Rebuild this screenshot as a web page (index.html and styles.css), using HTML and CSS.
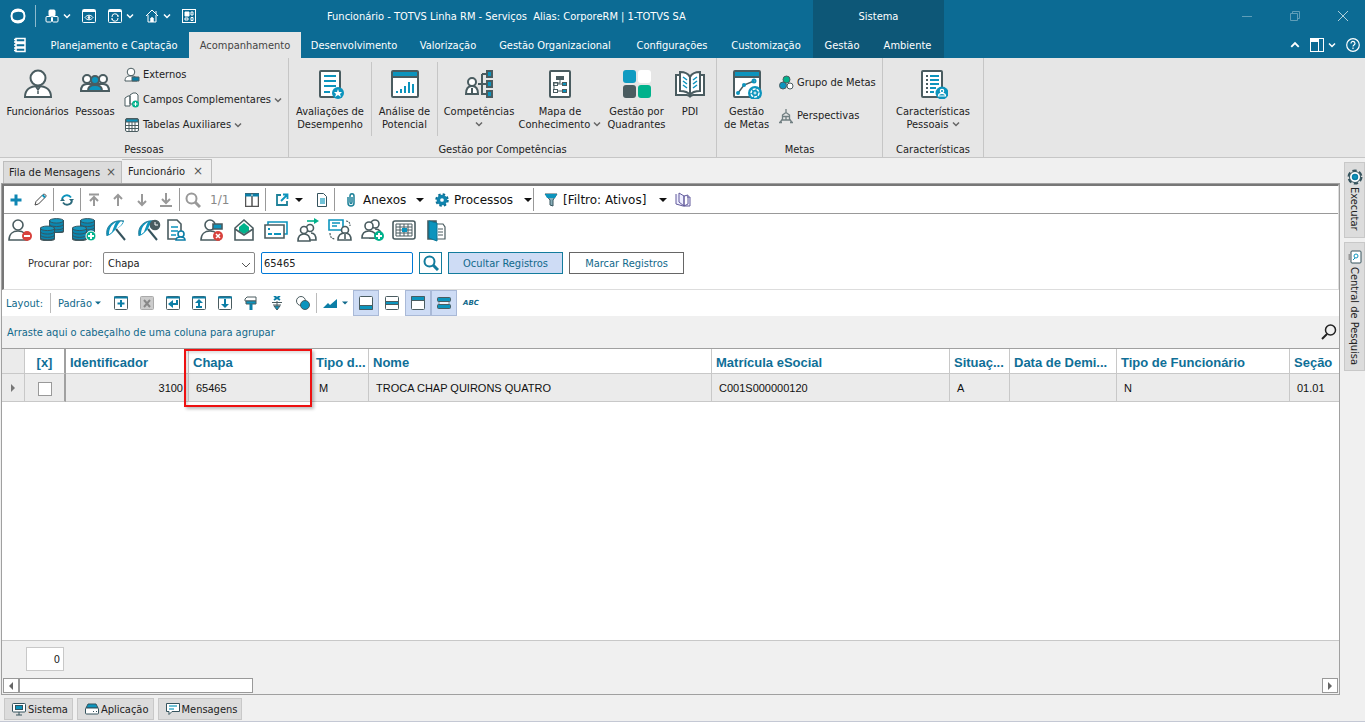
FILE: index.html
```html
<!DOCTYPE html>
<html lang="pt-BR">
<head>
<meta charset="utf-8">
<title>Funcionário - TOTVS Linha RM</title>
<link rel="stylesheet" href="styles.css">
</head>
<body>
<svg class="defs" aria-hidden="true">
  <symbol id="chev" viewBox="0 0 8 8"><path d="M1 2.5 4 5.5 7 2.5" fill="none" stroke="currentColor" stroke-width="1.5"/></symbol>
  <symbol id="caret" viewBox="0 0 8 8"><path d="M0 2h8L4 6z" fill="currentColor"/></symbol>
  <symbol id="person" viewBox="0 0 24 24"><circle cx="10" cy="7" r="5"/><path d="M1 22c0-6 4-9 9-9s9 3 9 9z"/></symbol>
  <symbol id="two" viewBox="0 0 24 24"><circle cx="15" cy="6" r="4"/><path d="M9 20h13c0-6-3-9-7-9"/><circle cx="9" cy="8" r="4"/><path d="M2 20c0-5 3-7 7-7s7 2 7 7z"/></symbol>
  <symbol id="data" viewBox="0 0 16 16"><path d="M0 3v10c0 4 16 4 16 0V3z" fill="#0b86af"/><ellipse cx="8" cy="3" rx="7.5" ry="2.4" fill="#1597bf" stroke="#35535d" stroke-width="1"/><path d="M.5 6.500c0 3.500 15 3.500 15 0M.5 10c0 3.500 15 3.500 15 0M.5 3v10c0 3 15 3 15 0V3" fill="none" stroke="#35535d" stroke-width="1"/></symbol>
  <symbol id="umb" viewBox="0 0 24 24"><path d="M12 11l9 11" stroke="#35535d" stroke-width="2"/><path d="M3 18C1 9 8 1 20 3c-1 4-4 6-8 8-3 3-5 6-9 7z" fill="#0c94bd" stroke="none"/><path d="M5 16.500C5 11 7 7 12 4c-2 4-3 7-4 10zM12 11c1-3 2-5 5-8l2 1c-2 4-4 5-7 7z" fill="#fff" stroke="none"/><path d="M3 18C1 9 8 1 20 3" fill="none" stroke="#2b7f9a" stroke-width="1"/></symbol>
</svg>

<header class="top">
  <div class="titlebar">
    <div class="quick">
      <svg class="logo" viewBox="0 0 16 16"><path d="M1 7C1 3 4 1 8 1s7 2 7 5c-4-3-10-3-14 1zM15 9c0 4-3 6-7 6s-7-2-7-5c4 3 10 3 14-1z" fill="#fff"/><circle cx="8" cy="8" r="6.500" fill="none" stroke="#fff" stroke-width="2"/></svg>
      <i class="tsep"></i>
      <button aria-label="Módulos"><svg class="i16" viewBox="0 0 16 16" fill="none" stroke="#fff"><rect x="5" y="2" width="6" height="6" rx="1" fill="#fff"/><rect x="2" y="8.500" width="5.500" height="5.500" rx="1"/><rect x="8.500" y="8.500" width="5.500" height="5.500" rx="1"/></svg><svg class="i8"><use href="#chev"/></svg></button>
      <button aria-label="Visualizar"><svg class="i16" viewBox="0 0 16 16" fill="none" stroke="#fff"><rect x="1.500" y="1.500" width="13" height="13" rx="1"/><path d="M2 3h12" stroke-width="2"/><path d="M4 9.500c2-3 6-3 8 0-2 3-6 3-8 0z"/><circle cx="8" cy="9.500" r="1" fill="#fff"/></svg></button>
      <button aria-label="Atualizar janela"><svg class="i16" viewBox="0 0 16 16" fill="none" stroke="#fff"><rect x="1.500" y="1.500" width="13" height="13" rx="1"/><path d="M2 3h12" stroke-width="2"/><path d="M5 9a3 3 0 0 1 6-.500M11 10a3 3 0 0 1-6 .500M10 8h2M4 11h2"/></svg><svg class="i8"><use href="#chev"/></svg></button>
      <button aria-label="Início"><svg class="i16" viewBox="0 0 16 16" fill="none" stroke="#fff"><path d="M2 8l6-6 6 6M4 7v7h3v-4h2v4h3V7M12 6V3"/><path d="M7 10h2v4H7z" fill="#fff"/></svg><svg class="i8"><use href="#chev"/></svg></button>
      <button aria-label="Painéis"><svg class="i16" viewBox="0 0 16 16" fill="none" stroke="#fff"><rect x="1.500" y="1.500" width="13" height="13"/><path d="M4 4h4v4H4z" fill="#fff"/><path d="M10 4h2v3h-2zM4 10h3v2H4zM10 9.500h2v3h-2z"/></svg></button>
    </div>
    <h1>Funcionário - TOTVS Linha RM - Serviços&nbsp; Alias: CorporeRM | 1-TOTVS SA</h1>
  </div>
  <div class="context">
    <div class="ctitle">Sistema</div>
    <div class="ctabs"><a href="#">Gestão</a><a href="#">Ambiente</a></div>
  </div>
  <div class="window">
    <div class="winbtns">
      <button aria-label="Minimizar"><svg class="i12" viewBox="0 0 12 12"><path d="M1 6.500h10"/></svg></button>
      <button aria-label="Restaurar"><svg class="i12" viewBox="0 0 12 12"><path d="M1.500 3.500h7v7h-7zM3.500 3.500v-2h7v7h-2"/></svg></button>
      <button class="close" aria-label="Fechar"><svg class="i12" viewBox="0 0 12 12"><path d="M1 1l10 10M11 1L1 11"/></svg></button>
    </div>
    <div class="helpbtns">
      <button aria-label="Recolher"><svg class="i10" viewBox="0 0 8 8"><path d="M1 5.500 4 2.500 7 5.500" fill="none" stroke="#fff" stroke-width="1.500"/></svg></button>
      <button aria-label="Leiaute"><svg class="i14" viewBox="0 0 14 14" fill="none" stroke="#fff"><rect x=".5" y=".5" width="13" height="13"/><path d="M0 2h9M8.500 0v14" /><path d="M0 0h8v4H0z" fill="#fff" stroke="none"/></svg><svg class="i8"><use href="#chev"/></svg></button>
      <button aria-label="Ajuda"><svg class="i14" viewBox="0 0 14 14" fill="none" stroke="#fff" stroke-width="1.200"><circle cx="7" cy="7" r="6.300"/><path d="M5 5.500c0-3 4-2.500 4 0C9 7 7 7 7 8.500M7 9.500v1.500"/></svg></button>
    </div>
  </div>
  <nav class="menu">
    <button aria-label="Menu"><svg class="i16" viewBox="0 0 16 16" fill="none" stroke="#fff" stroke-width="1.500"><path d="M4 1.500h9v3.500H4zM4 6.500h9v3.500H4zM4 11h9v3.500H4zM2 2.500h2M2 5h2M2 8h2M2 11h2M2 13.500h2"/></svg></button>
    <a href="#">Planejamento e Captação</a><a href="#" class="on">Acompanhamento</a><a href="#">Desenvolvimento</a><a href="#">Valorização</a><a href="#">Gestão Organizacional</a><a href="#">Configurações</a><a href="#">Customização</a>
  </nav>
</header>

<section class="ribbon">
  <div class="group g1">
    <div class="items">
      <button class="big"><svg viewBox="0 0 30 30" class="i30 ln"><circle cx="15" cy="9" r="7.500" fill="#fff"/><path d="M2 28c0-7 5-11 13-11s13 4 13 11z" fill="#fff"/><path d="M13 18h4l-2 3zM15 20v5" stroke-width="1.500"/></svg><span>Funcionários</span></button>
      <button class="big"><svg viewBox="0 0 30 30" class="i30 ln"><circle cx="7" cy="10" r="4" fill="#fff"/><circle cx="23" cy="10" r="4" fill="#fff"/><path d="M1 22c0-5 2-7 6-7h16c4 0 6 2 6 7z" fill="#fff"/><circle cx="15" cy="11" r="4" fill="#0c94bd"/><path d="M8 22c0-4 3-6 7-6s7 2 7 6z" fill="#0c94bd"/></svg><span>Pessoas</span></button>
      <div class="list">
        <button><svg class="i16 ln2" viewBox="0 0 16 16"><circle cx="7" cy="5" r="3.800" fill="#fff"/><path d="M1 14c0-4 2-5 6-5s6 1 6 5z" fill="#fff"/><path d="M8 10h7v4H8z" fill="#0b7ea6"/></svg>Externos</button>
        <button><svg class="i16 ln2" viewBox="0 0 16 16"><path d="M1 6l3-2h2v10H1zM6 3l3-2h3l2 2v9H6z" fill="#fff"/><circle cx="11.500" cy="12" r="3.500" fill="#00b28c" stroke="none"/><path d="M11.500 10v4M9.500 12h4" stroke="#fff"/></svg>Campos Complementares<svg class="i8 cv"><use href="#chev"/></svg></button>
        <button><svg class="i16 ln2" viewBox="0 0 16 16"><rect x="1.500" y="1.500" width="13" height="13" rx="1.500" fill="#fff"/><path d="M2 2h12v3H2z" fill="#0c94bd"/><path d="M2 8.500h12M2 11.500h12M5 5v9M8 5v9M11 5v9"/></svg>Tabelas Auxiliares<svg class="i8 cv"><use href="#chev"/></svg></button>
      </div>
    </div>
    <div class="cap">Pessoas</div>
  </div>
  <div class="group g2">
    <div class="items">
      <button class="big"><svg viewBox="0 0 30 30" class="i30 ln"><rect x="5" y="2" width="20" height="26" rx="1" fill="#fff"/><path d="M9 7h12M9 12h12M9 17h12M9 23h6" stroke="#0c94bd"/><circle cx="23" cy="24" r="6" fill="#0c94bd" stroke="none"/><path d="M23 20l1 3h3l-2 2 1 3-3-2-3 2 1-3-2-2h3z" fill="#fff" stroke="none"/></svg><span>Avaliações de<br>Desempenho</span></button>
      <i class="gsep"></i>
      <button class="big"><svg viewBox="0 0 30 30" class="i30 ln"><rect x="2" y="2" width="26" height="26" rx="1" fill="#fff"/><path d="M3 3h24v4H3z" fill="#0c94bd" stroke="none"/><path d="M2 8h26"/><path d="M7 24v-2M11 24v-4M15 24v-7M19 24V13M23 24V15" stroke="#0c94bd"/></svg><span>Análise de<br>Potencial</span></button>
      <i class="gsep"></i>
      <button class="big"><svg viewBox="0 0 30 30" class="i30 ln"><circle cx="8" cy="13" r="4" fill="#fff"/><path d="M2 25c0-5 2-8 6-8s6 3 6 8zM8 19v5" fill="#fff"/><path d="M14 15h9M18 5v20h5M18 5h5"/><path d="M23 2h5v6h-5zM23 12h5v6h-5zM23 22h5v6h-5z" fill="#0c94bd"/></svg><span>Competências<br><svg class="i8 cv"><use href="#chev"/></svg></span></button>
      <button class="big"><svg viewBox="0 0 30 30" class="i30 ln"><rect x="5" y="2" width="20" height="26" rx="1" fill="#fff"/><rect x="12" y="8" width="6" height="2"/><path d="M15 10v4H9v7" stroke-width="1"/><rect x="8.500" y="13.500" width="4" height="3" stroke-width="1"/><rect x="8.500" y="20.500" width="4" height="3" stroke-width="1"/><path d="M13 15h5M13 22h5" stroke-width="1"/><rect x="17.500" y="13.500" width="4" height="3" fill="#0c94bd" stroke-width="1"/><rect x="17.500" y="20.500" width="4" height="3" fill="#0c94bd" stroke-width="1"/></svg><span>Mapa de<br>Conhecimento <svg class="i8 cv"><use href="#chev"/></svg></span></button>
      <button class="big"><svg viewBox="0 0 30 30" class="i30"><rect x="1" y="1" width="13" height="13" rx="3" fill="#0f9bc1"/><rect x="16" y="1" width="13" height="13" rx="3" fill="#fff"/><rect x="1" y="16" width="13" height="13" rx="3" fill="#4a5c60"/><rect x="16" y="16" width="13" height="13" rx="3" fill="#00b28c"/></svg><span>Gestão por<br>Quadrantes</span></button>
      <button class="big"><svg viewBox="0 0 30 30" class="i30 ln"><path d="M5 6H1v20h11c1 0 2 1 3 1s2-1 3-1h11V6h-4" fill="#fff"/><path d="M5 3c5 0 8 1 10 5v18c-2-3-5-4-10-4zM25 3c-5 0-8 1-10 5v18c2-3 5-4 10-4z" fill="#fff"/><path d="M8 8l4 3M8 12l4 3M8 16l4 3M22 8l-4 3M22 12l-4 3M22 16l-4 3" stroke="#0c94bd" stroke-width="1.500"/></svg><span>PDI</span></button>
    </div>
    <div class="cap">Gestão por Competências</div>
  </div>
  <div class="group g3">
    <div class="items">
      <button class="big"><svg viewBox="0 0 30 30" class="i30 ln"><rect x="2" y="2" width="26" height="26" rx="1" fill="#fff"/><path d="M3 3h24v4H3z" fill="#0c94bd" stroke="none"/><path d="M2 8h26"/><path d="M6 24l6-8 10-4" stroke-width="1.500"/><circle cx="6" cy="24" r="1" stroke="#0c94bd"/><circle cx="12" cy="16" r="1" stroke="#0c94bd"/><circle cx="22" cy="12" r="1.500" stroke="#0c94bd"/><circle cx="23" cy="24" r="7" fill="#0c94bd" stroke="none"/><circle cx="23" cy="24" r="4" stroke="#fff" stroke-width="1.500" stroke-dasharray="3 1"/><circle cx="23" cy="24" r="1" stroke="#fff" stroke-width="1"/></svg><span>Gestão<br>de Metas</span></button>
      <div class="list wide">
        <button><svg class="i16 ln2" viewBox="0 0 16 16"><circle cx="8.500" cy="4.500" r="3.500" fill="#00b28c"/><circle cx="5" cy="10.500" r="3.500" fill="#0c94bd"/><circle cx="12" cy="11" r="3" fill="#fff"/></svg>Grupo de Metas</button>
        <button><svg class="i16 ln2" viewBox="0 0 16 16"><path d="M8 1v4M4.500 7L8 4.500 11.500 7v5h-7zM4 8.500h8M8 8v4M4.500 11L2 14.500M11.500 11l2.500 3.500M1 14.500h3M12 14.500h3" stroke-width="1.300" opacity=".75"/></svg>Perspectivas</button>
      </div>
    </div>
    <div class="cap">Metas</div>
  </div>
  <div class="group g4">
    <div class="items">
      <button class="big"><svg viewBox="0 0 30 30" class="i30 ln"><rect x="4" y="2" width="20" height="26" rx="1" fill="#fff"/><path d="M8 7h2M8 11h2M8 15h2M8 19h2M8 23h2" /><path d="M12 7h9M12 11h9M12 15h9M12 19h6M12 23h4" stroke="#0c94bd"/><circle cx="24" cy="24" r="6.500" fill="#0c94bd" stroke="none"/><circle cx="24" cy="22" r="1.700" stroke="#fff" stroke-width="1.200"/><path d="M20.500 27c0-3.500 7-3.500 7 0z" stroke="#fff" stroke-width="1.200"/></svg><span>Características<br>Pessoais <svg class="i8 cv"><use href="#chev"/></svg></span></button>
    </div>
    <div class="cap">Características</div>
  </div>
</section>

<div class="work">
  <main>
    <div class="doctabs">
      <div class="dt">Fila de Mensagens<button aria-label="Fechar Fila de Mensagens">×</button></div>
      <div class="dt on">Funcionário<button aria-label="Fechar Funcionário">×</button></div>
    </div>
    <div class="panel">
      <div class="inner">
        <div class="tools">
          <button aria-label="Novo"><svg class="i14" viewBox="0 0 14 14"><path d="M7 1.500v11M1.500 7h11" stroke="#0f86b3" stroke-width="3"/></svg></button>
          <button aria-label="Editar"><svg class="i14" viewBox="0 0 14 14" fill="none" stroke="#444"><path d="M2 12l1-3.500 7-7c2-1 4 1 2.500 2.500l-7 7z"/><path d="M9.500 2l2.500 2.500" stroke="#0c94bd" stroke-width="2"/></svg></button>
          <i></i>
          <button aria-label="Atualizar"><svg class="i14" viewBox="0 0 14 14" fill="none" stroke="#0c94bd" stroke-width="1.800"><path d="M2 6a5 5 0 0 1 9-1.500"/><path d="M12 8a5 5 0 0 1-9 1.500" stroke="#2c6a7c"/><path d="M9 6h5l-2.500 3zM5 8H0l2.500-3z" fill="#2c6a7c" stroke="none"/></svg></button>
          <i></i>
          <button aria-label="Primeiro"><svg class="i14 gr" viewBox="0 0 14 14"><path d="M2 1.500h10M7 4v9M3 8l4-4 4 4"/></svg></button>
          <button aria-label="Anterior"><svg class="i14 gr" viewBox="0 0 14 14"><path d="M7 2v11M3 6l4-4 4 4"/></svg></button>
          <button aria-label="Próximo"><svg class="i14 gr" viewBox="0 0 14 14"><path d="M7 1v11M3 8l4 4 4-4"/></svg></button>
          <button aria-label="Último"><svg class="i14 gr" viewBox="0 0 14 14"><path d="M7 0v10M3 6l4 4 4-4M1 13h12"/></svg></button>
          <i></i>
          <button aria-label="Localizar"><svg class="i16 gr" viewBox="0 0 16 16"><circle cx="6.500" cy="6.500" r="5"/><path d="M10 10l5 5" stroke-width="3"/></svg></button>
          <span class="count">1/1</span>
          <button aria-label="Colunas"><svg class="i14" viewBox="0 0 14 14" fill="none" stroke="#555"><path d="M.5.500h13v13H.5zM7 3v11" stroke-width="1.500"/><path d="M0 2h6.500M7.500 2H14" stroke="#0c7ea6" stroke-width="3"/></svg></button>
          <i></i>
          <button class="exp" aria-label="Exportar"><svg class="i14" viewBox="0 0 14 14" fill="none" stroke="#1c8098" stroke-width="1.800"><path d="M6 2H2v10h10V8"/><path d="M6 8l6-6M8 1.500h4.500V6" stroke="#0c94bd"/></svg><svg class="i8"><use href="#caret"/></svg></button>
          <button class="doc" aria-label="Relatório"><svg class="i14" viewBox="0 0 14 14" fill="none" stroke="#35535d"><path d="M2.500.500h6l3 3v10h-9z"/><path d="M5 6h5M5 8h5M5 10h5" stroke="#42aeca" stroke-width="1.500"/></svg></button>
          <i></i>
          <button class="tx anexos"><svg class="i14" viewBox="0 0 14 14" fill="none" stroke="#1c8098" stroke-width="1.500"><path d="M4 4v6c0 4 6 4 6 0V3c0-3-4-3-4 0v6c0 2 2 2 2 0V4"/></svg><span>Anexos</span><svg class="i8"><use href="#caret"/></svg></button>
          <button class="tx proc"><svg class="i14" viewBox="0 0 14 14" fill="none"><circle cx="7" cy="7" r="5.500" stroke="#0b6d91" stroke-width="2.500" stroke-dasharray="2.320 2"/><circle cx="7" cy="7" r="3.600" stroke="#0f83ad" stroke-width="3.500"/></svg><span>Processos</span><svg class="i8"><use href="#caret"/></svg></button>
          <i></i>
          <button class="tx filtro"><svg class="i14" viewBox="0 0 14 14"><path d="M1 1h12L9 7v6l-3-1V7z" fill="#8aafb9" stroke="#35535d"/><path d="M1 1h12l-2 4H3z" fill="#0c94bd"/></svg><span>[Filtro: Ativos]</span><svg class="i8"><use href="#caret"/></svg></button>
          <button class="fav" aria-label="Favoritos"><svg class="i16" viewBox="0 0 16 16" fill="#eef" stroke="#625b9b"><path d="M1 2v10l7 2h7V5h-3M4 1v9l5 4V4zM9 4l4-1v9l-4 2z"/></svg></button>
        </div>
        <div class="actions">
          <button aria-label="Demitir"><svg viewBox="0 0 24 24"><use href="#person" fill="#fff"/><circle cx="19" cy="18" r="5" fill="#d8423d" stroke="none"/><path d="M16 18h6" stroke="#fff" stroke-width="2"/></svg></button>
          <button aria-label="Bases"><svg viewBox="0 0 24 24"><use href="#data" x="9" y="0" width="15" height="15"/><use href="#data" x="0" y="7" width="15" height="16"/></svg></button>
          <button aria-label="Incluir base"><svg viewBox="0 0 24 24"><use href="#data" x="8" y="0" width="15" height="15"/><use href="#data" x="0" y="7" width="15" height="16"/><circle cx="19" cy="18" r="5" fill="#00b28c" stroke="#fff" stroke-width="1"/><path d="M16 18h6M19 15v6" stroke="#fff" stroke-width="2"/></svg></button>
          <button aria-label="Férias"><svg viewBox="0 0 24 24"><use href="#umb"/></svg></button>
          <button aria-label="Programar férias"><svg viewBox="0 0 24 24"><use href="#umb"/><circle cx="19" cy="7" r="4.500" fill="#4a5c60"/><path d="M19 4v3h3" stroke="#fff" stroke-width="1"/></svg></button>
          <button aria-label="Ficha"><svg viewBox="5 0 24 24"><path d="M5 2h9l4 4v15H5z" fill="#fff"/><path d="M8 9h7M8 13h7M8 17h5" stroke="#0c94bd"/><circle cx="18" cy="16" r="3" stroke="#0c7ea6" fill="#fff"/><path d="M13 22c0-4 9-4 9 0z" stroke="#0c7ea6" fill="#fff"/></svg></button>
          <button aria-label="Cancelar"><svg viewBox="0 0 24 24"><use href="#person" fill="#fff"/><path d="M13 6h9v5h-9z" fill="#0c94bd"/><circle cx="18" cy="18" r="5" fill="#d8423d" stroke="none"/><path d="M16 16l4 4M20 16l-4 4" stroke="#fff" stroke-width="1.500"/></svg></button>
          <button aria-label="Correio"><svg viewBox="0 0 24 24"><path d="M3 10l9-8 9 8v12H3z" fill="#fff"/><path d="M7 9l5-4 5 4v4l-5 3-5-3z" fill="#00b28c" stroke="none"/><path d="M3 11l9 6 9-6"/></svg></button>
          <button aria-label="Cartões"><svg viewBox="0 0 24 24"><path d="M4 4h19v12H4z" stroke="#0c94bd"/><path d="M1 7h19v13H1z" fill="#fff"/><path d="M4 11h2M4 16h4M10 16h7" stroke="#0c94bd" stroke-width="2"/></svg></button>
          <button aria-label="Transferir"><svg viewBox="0 0 24 24"><path d="M11 3h9" stroke="#00b28c"/><path d="M18 0l5 3-5 3z" fill="#00b28c" stroke="none"/><circle cx="14" cy="10" r="3.500"/><path d="M10 22h10c0-5-2-7-5-7"/><circle cx="8" cy="12" r="3.500" fill="#fff"/><path d="M2 23c0-5 2-7 6-7s6 2 6 7z" fill="#fff"/></svg></button>
          <button aria-label="Substituir"><svg viewBox="0 0 24 24"><path d="M1 2h14v10H1z" fill="#fff" stroke="#0c94bd"/><path d="M4 5h8M4 8h5" stroke="#0c94bd"/><path d="M18 3c3 0 4 2 4 5M2 15c0 4 2 6 5 6" stroke-width="1.200" stroke-dasharray="2 1"/><circle cx="17" cy="12" r="3.500" fill="#fff"/><path d="M10 22c0-5 3-7 7-7s6 2 6 7zM17 16v5" fill="#fff"/></svg></button>
          <button aria-label="Incluir dependentes"><svg viewBox="0 0 24 24"><use href="#two" fill="#fff"/><circle cx="19" cy="18" r="5" fill="#00b28c" stroke="none"/><path d="M16 18h6M19 15v6" stroke="#fff" stroke-width="2"/></svg></button>
          <button aria-label="Calendário"><svg viewBox="0 0 24 24"><rect x="1" y="3" width="22" height="18" rx="2"/><path d="M4 6h16v12H4zM4 9h16M4 12h16M4 15h16M8 6v12M12 6v12M16 6v12" stroke-width="1"/><path d="M10 10h5v4h-5z" fill="#0c94bd" stroke="none"/></svg></button>
          <button aria-label="Livro"><svg viewBox="0 0 24 24"><path d="M12 6h7l2 3v12h-9" stroke-width="1.200"/><path d="M14 11h5M14 14h5M14 17h5" stroke-width="1"/><path d="M4 3h8v18H4z" fill="#35535d"/><path d="M5 3l8 2v18l-8-3z" fill="#0c94bd" stroke="#0b7696" stroke-width="1"/></svg></button>
        </div>
        <form class="search" onsubmit="return false">
          <label for="campo">Procurar por:</label>
          <span class="sel"><select id="campo"><option>Chapa</option></select><svg class="i10" viewBox="0 0 10 10"><path d="M1 3l4 4 4-4" fill="none" stroke="#555"/></svg></span>
          <input type="text" value="65465" aria-label="Valor da busca">
          <button class="go" aria-label="Procurar"><svg class="i16" viewBox="0 0 16 16" fill="none" stroke="#137c9d"><circle cx="6.500" cy="6.500" r="5" stroke-width="2"/><path d="M10 10l5 5" stroke-width="3"/></svg></button>
          <button class="fb active">Ocultar Registros</button>
          <button class="fb">Marcar Registros</button>
        </form>
      </div>
      <div class="layout">
        <span class="lt">Layout:</span><i></i>
        <button class="pad">Padrão <svg class="i6"><use href="#caret"/></svg></button>
        <button aria-label="Adicionar"><svg class="i14" viewBox="0 0 14 14"><rect x=".5" y=".5" width="13" height="13" rx="1"/><path d="M0 1.500h14M7 4v7M3.500 7.500h7" stroke="#0c7ea6" stroke-width="2"/></svg></button>
        <button aria-label="Excluir"><svg class="i14" viewBox="0 0 14 14"><rect x=".5" y=".5" width="13" height="13" rx="1" fill="#ccc" stroke="#aaa"/><path d="M4 4l6 7M10 4l-6 7" stroke="#888" stroke-width="2"/></svg></button>
        <button aria-label="Restaurar layout"><svg class="i14" viewBox="0 0 14 14"><rect x=".5" y=".5" width="13" height="13" rx="1"/><path d="M0 1.500h14M11 4v4H5" stroke="#0c7ea6" stroke-width="2"/><path d="M7 4v8L2 8z" fill="#0c7ea6" stroke="none"/></svg></button>
        <button aria-label="Carregar"><svg class="i14" viewBox="0 0 14 14"><rect x=".5" y=".5" width="13" height="13" rx="1"/><path d="M0 1.500h14M7 6v5M4 11h6" stroke="#0c7ea6" stroke-width="2"/><path d="M3 7h8L7 3z" fill="#0c7ea6" stroke="none"/></svg></button>
        <button aria-label="Salvar"><svg class="i14" viewBox="0 0 14 14"><rect x=".5" y=".5" width="13" height="13" rx="1"/><path d="M0 1.500h14M7 3v5" stroke="#0c7ea6" stroke-width="2"/><path d="M3 8h8l-4 4z" fill="#0c7ea6" stroke="none"/></svg></button>
        <button aria-label="Formatar"><svg class="i14" viewBox="0 0 14 14"><path d="M3 1h9v4H1V3z" fill="#fff"/><path d="M2 5h10v3H2z" fill="#0c94bd"/><path d="M7 8v6" stroke="#0c7ea6" stroke-width="3"/></svg></button>
        <button aria-label="Ajustar"><svg class="i14" viewBox="0 0 14 14"><path d="M4 0l6 4M10 0L4 4" stroke="#0c7ea6" stroke-width="2"/><path d="M2 6.500h10M3 9h8M7 5v9" /><path d="M4 10h6l-3 4z" fill="#0c94bd"/></svg></button>
        <button aria-label="Condições"><svg class="i14" viewBox="0 0 14 14"><circle cx="5" cy="5" r="4.500" fill="#fff"/><circle cx="9" cy="9" r="4.500" fill="#0c94bd"/></svg></button>
        <i></i>
        <button class="chart" aria-label="Gráfico"><svg class="i14" viewBox="0 0 14 14"><path d="M0 12l5-5 2 2 7-6v9z" fill="#0c7ea6" stroke="none"/></svg><svg class="i6"><use href="#caret"/></svg></button>
        <button class="sq" aria-label="Rodapé"><svg class="i14" viewBox="0 0 14 14"><rect x=".5" y=".5" width="13" height="13" rx="1" fill="#fff"/><path d="M.5 9.500h13v4H.5z" fill="#0c94bd"/></svg></button>
        <button aria-label="Centro"><svg class="i14" viewBox="0 0 14 14"><rect x=".5" y=".5" width="13" height="13" rx="1" fill="#fff"/><path d="M.5 5.500h13v3H.5z" fill="#0c94bd"/></svg></button>
        <button class="sq" aria-label="Cabeçalho"><svg class="i14" viewBox="0 0 14 14"><rect x=".5" y=".5" width="13" height="13" rx="1" fill="#fff"/><path d="M.5.500h13v4H.5z" fill="#0c94bd"/></svg></button>
        <button class="sq" aria-label="Linhas"><svg class="i14" viewBox="0 0 14 14"><path d="M2 5v4h10V5" fill="#fff" opacity=".6"/><rect x=".5" y="1.500" width="13" height="4" rx="1" fill="#0c94bd"/><rect x=".5" y="8.500" width="13" height="4" rx="1" fill="#0c94bd"/></svg></button>
        <button class="abc">ABC</button>
      </div>
      <div class="groupby"><span>Arraste aqui o cabeçalho de uma coluna para agrupar</span><button aria-label="Pesquisar na grade"><svg class="i16" viewBox="0 0 16 16" fill="none" stroke="#222"><circle cx="9.500" cy="6" r="5" stroke-width="1.500"/><path d="M6 10l-5 5" stroke-width="2"/></svg></button></div>
      <div class="gridbox">
        <table>
          <colgroup><col class="c0"><col class="c1"><col class="c2"><col class="c3"><col class="c4"><col class="c5"><col class="c6"><col class="c7"><col class="c8"><col class="c9"><col class="c10"></colgroup>
          <thead><tr><th class="ind"></th><th class="ck">[x]</th><th>Identificador</th><th>Chapa</th><th>Tipo d...</th><th>Nome</th><th>Matrícula eSocial</th><th>Situaç...</th><th>Data de Demi...</th><th>Tipo de Funcionário</th><th>Seção</th></tr></thead>
          <tbody><tr><td class="ind"><svg class="i6" viewBox="0 0 6 8"><path d="M1 0l4 4-4 4z" fill="#777"/></svg></td><td class="ck"><input type="checkbox" aria-label="Selecionar registro"></td><td class="num">3100</td><td>65465</td><td>M</td><td>TROCA CHAP QUIRONS QUATRO</td><td>C001S000000120</td><td>A</td><td></td><td>N</td><td>01.01</td></tr></tbody>
        </table>
        <div class="mark"></div>
      </div>
      <div class="summary"><output>0</output></div>
      <div class="scroll"><button aria-label="Rolar à esquerda"><svg class="i6" viewBox="0 0 6 8"><path d="M5 0v8L1 4z" fill="#666"/></svg></button><div class="thumb"></div><span class="track"></span><button aria-label="Rolar à direita"><svg class="i6" viewBox="0 0 6 8"><path d="M1 0l4 4-4 4z" fill="#666"/></svg></button></div>
    </div>
  </main>
  <aside>
    <button><svg class="i16" viewBox="0 0 16 16" fill="none" stroke="#35535d"><circle cx="8" cy="8" r="6" stroke-width="3" stroke-dasharray="4 2.283"/><circle cx="8" cy="8" r="5.500" fill="#fff"/><circle cx="8" cy="8" r="2.500" fill="#0c94bd" stroke="#0c7ea6" stroke-width="1.500"/></svg><span>Executar</span></button>
    <button><svg class="i16" viewBox="0 0 16 16" fill="none" stroke="#35535d"><rect x="4" y="2" width="10" height="12" rx="1" fill="#fff"/><path d="M2.500 5v6" stroke="#999" stroke-width="2"/><circle cx="9" cy="7" r="2" stroke="#0c94bd"/><path d="M8 9l-2 2" stroke="#0c94bd"/></svg><span>Central de Pesquisa</span></button>
  </aside>
</div>

<footer>
  <button><svg class="i14" viewBox="0 0 14 14" fill="none" stroke="#35535d"><rect x=".5" y="1.500" width="13" height="8.500" rx="1" fill="#fff"/><rect x="3.500" y="3.500" width="7" height="4" fill="#0c94bd"/><path d="M7 10v3M4 13h6"/></svg>Sistema</button>
  <button><svg class="i14" viewBox="0 0 14 14" fill="none" stroke="#35535d"><path d="M1 6l2-4h8l2 4z" fill="#0c94bd"/><rect x=".5" y="6" width="13" height="6" rx="1" fill="#fff"/><path d="M8 9.500h1M11 9.500h1"/></svg>Aplicação</button>
  <button><svg class="i14" viewBox="0 0 14 14" fill="none" stroke="#35535d"><path d="M.5 1.500h13v8H6l-3 3v-3H.5z" fill="#fff"/><path d="M3 4h8M3 7h5" stroke="#42aeca" stroke-width="1.500"/></svg>Mensagens</button>
</footer>
</body>
</html>
```
FILE: styles.css
```css
* { box-sizing: border-box; }
body {
  margin: 0; min-height: 100vh; display: flex; flex-direction: column;
  background: #f0f0f0; color: #222;
  font: 11px/13px "DejaVu Sans Condensed", "Noto Sans", sans-serif; overflow: hidden;
}
button { font: inherit; color: inherit; background: none; border: 0; padding: 0; margin: 0; display: inline-flex; align-items: center; justify-content: center; }
a { color: inherit; text-decoration: none; }
svg { flex: none; }
i { flex: none; }
.defs { position: absolute; width: 0; height: 0; }
.i6 { width: 6px; height: 8px; }
.i8 { width: 8px; height: 8px; }
.i10 { width: 10px; height: 10px; }
.i12 { width: 12px; height: 12px; }
.i14 { width: 14px; height: 14px; }
.i16 { width: 16px; height: 16px; }
.i30 { width: 30px; height: 30px; }
.ln { fill: none; stroke: #4a5c60; stroke-width: 2; }
.ln2 { fill: none; stroke: #4a5c60; }
.cv { color: #666; }

/* Title bar and menu */
.top { display: grid; grid-template: 32px 26px / 813px 131px 1fr; background: #0c6b94; color: #fff; }
.titlebar { display: grid; grid-template-columns: 327px 1fr; align-items: center; }
.quick { display: flex; align-items: center; }
.quick button { margin-right: 10px; gap: 3px; }
.logo { width: 16px; height: 16px; margin-left: 10px; }
.tsep { width: 1px; height: 22px; background: #8dbacd; margin: 0 8px 0 9px; }
h1 { margin: 0; font: inherit; white-space: nowrap; }
.context { grid-row: 1 / 3; grid-column: 2; background: #0d5777; display: grid; grid-template-rows: 32px 26px; align-items: center; text-align: center; }
.ctabs { display: grid; grid-template-columns: 58px 73px; }
.window { grid-row: 1 / 3; grid-column: 3; display: grid; grid-template-rows: 32px 26px; }
.winbtns, .helpbtns { display: flex; justify-content: flex-end; align-items: center; }
.winbtns { gap: 36px; padding-right: 16px; fill: none; stroke: #5f9eb8; }
.close { stroke: #b0cfdb; }
.helpbtns { gap: 10px; padding-right: 5px; }
.helpbtns button { gap: 4px; }
.menu { grid-row: 2; grid-column: 1; display: grid; grid-template-columns: 39px 150px 112px 106px 82px 132px 102px 86px; align-items: stretch; }
.menu a { display: flex; align-items: center; justify-content: center; white-space: nowrap; }
.menu .on { background: #e6e6e6; color: #444; }

/* Ribbon */
.ribbon { display: flex; height: 100px; background: #e6e6e6; border-bottom: 1px solid #c6c6c6; }
.group { display: flex; flex-direction: column; border-right: 1px solid #c6c6c6; white-space: nowrap; }
.g1 { width: 289px; } .g2 { width: 428px; } .g3 { width: 166px; } .g4 { width: 101px; }
.items { display: grid; flex: 1; }
.g1 .items { grid-template-columns: 75px 40px 1fr; }
.g2 .items { grid-template-columns: 82px 1px 65px 1px 82px 80px 73px 34px; }
.g3 .items { grid-template-columns: 59px 1fr; }
.big { flex-direction: column; justify-content: flex-start; padding-top: 11px; gap: 6px; width: 100%; min-width: 0; }
.g2 .gsep { background: #c6c6c6; margin: 4px 0 0; height: 74px; }
.cap { text-align: center; height: 14px; }
.list { padding: 4px 0 0 9px; display: flex; flex-direction: column; align-items: flex-start; }
.list button { height: 25px; gap: 3px; }
.wide { padding: 8px 0 0 2px; }
.wide button { height: 33px; }

/* Work area */
.work { flex: 1; display: flex; }
main { flex: 1; min-width: 0; display: flex; flex-direction: column; padding: 1px 0 0 1px; }
.doctabs { display: flex; align-items: flex-end; height: 24px; padding-left: 2px; }
.dt { height: 22px; padding: 0 5px; display: flex; align-items: center; justify-content: space-between; background: #dcdcdc; border: 1px solid #bdbdbd; border-bottom: 0; width: 119px; }
.dt.on { height: 24px; width: 90px; background: #f0f0f0; border-left: 0; padding: 0 8px 0 6px; }
.dt button { font: 12px/13px "DejaVu Sans", sans-serif; color: #555; }
.panel { flex: 1; display: flex; flex-direction: column; border: 1px solid #a0a0a0; background: #fff; }
.inner { border: solid #777; border-width: 2px 0 0 2px; border-bottom: 1px solid #ddd; border-right: 1px solid #ddd; }
.tools { display: flex; align-items: center; height: 28px; border-bottom: 1px solid #999; color: #111; font: 12px/16px "DejaVu Sans", sans-serif; }
.tools i { width: 1px; height: 23px; background: #999; margin: 0 1px; }
.tools button { width: 24px; height: 24px; }
.tools .count { width: 35px; color: #888; padding-left: 5px; }
.tools .exp { width: 44px; gap: 6px; }
.tools .doc { width: 22px; }
.tools .tx { width: auto; justify-content: flex-start; gap: 5px; white-space: nowrap; }
.tools .anexos { padding-left: 8px; width: 88px; }
.tools .proc { padding-left: 11px; width: 108px; }
.tools .filtro { padding-left: 9px; width: 132px; }
.tools .fav { width: 32px; }
.tx span { flex: 1; text-align: left; }
.gr { fill: none; stroke: #999; stroke-width: 2; }
.actions { display: flex; height: 32px; align-items: center; }
.actions button { width: 32px; }
.actions svg { width: 24px; height: 24px; fill: none; stroke: #4a5c60; stroke-width: 1.6; overflow: visible; }
.search { display: flex; height: 43px; align-items: flex-start; padding: 6px 0 0 24px; color: #333; }
.search label { width: 75px; line-height: 24px; }
.sel { position: relative; width: 152px; margin-right: 6px; }
.sel svg { position: absolute; right: 4px; top: 8px; pointer-events: none; }
select { appearance: none; width: 100%; height: 22px; border: 1px solid #888; border-radius: 2px; background: #fff; font: inherit; padding: 0 4px; color: #222; }
.search input { width: 152px; height: 22px; border: 1px solid #0078d7; border-radius: 2px; font: inherit; padding: 0 2px; color: #222; margin-right: 6px; }
.go { width: 23px; height: 22px; border: 1px solid #137c9d; margin-right: 6px; }
.fb { width: 115px; height: 22px; border: 1px solid #666; color: #11698b; margin-right: 6px; background: #fff; }
.fb.active { background: #cedcf5; border-color: #137c9d; }
.layout { display: flex; height: 26px; align-items: center; color: #11698b; }
.layout svg { fill: none; stroke: #4a5c60; }
.layout use { stroke: none; }
.layout i { width: 1px; height: 20px; background: #bbb; }
.lt { padding-left: 4px; width: 48px; }
.layout button { width: 26px; height: 26px; gap: 5px; }
.layout .pad { width: 57px; gap: 3px; }
.layout .chart { width: 36px; }
.layout .sq { background: #cedcf5; border: 1px solid #a9b9d7; }
.layout .abc { font: italic bold 7px/10px "DejaVu Sans", sans-serif; color: #11698b; width: 28px; }
.groupby { height: 32px; background: #f0f0f0; display: flex; align-items: center; justify-content: space-between; padding: 0 2px 0 5px; color: #11698b; }
.gridbox { flex: 1; position: relative; border-top: 1px solid #a0a0a0; overflow: hidden; min-height: 60px; }
table { border-collapse: separate; border-spacing: 0; table-layout: fixed; width: 100%; }
.c0 { width: 23px; } .c1 { width: 41px; } .c2 { width: 123px; } .c3 { width: 123px; } .c4 { width: 57px; } .c5 { width: 343px; }
.c6 { width: 238px; } .c7 { width: 60px; } .c8 { width: 107px; } .c9 { width: 173px; }
th, td { padding: 0 0 0 4px; border-right: 1px solid #c8c8c8; text-align: left; white-space: nowrap; overflow: hidden; }
th:last-child, td:last-child { border-right: 0; }
th { height: 25px; padding-top: 3px; border-bottom: 1px solid #c8c8c8; color: #0f6f97; font: bold 13px/16px "Liberation Sans", sans-serif; background: #fff; }
td { height: 28px; padding-left: 7px; border-bottom: 1px solid #c8c8c8; background: #ebebeb; color: #111; font: 11px/16px "Liberation Sans", sans-serif; }
th.ind { background: #ebebeb; }
.ind.ind, td.ck { padding: 0; text-align: center; }
th.ck { padding-left: 0; text-align: center; }
.ck { border-right: 2px solid #a0a0a0; }
td.num { text-align: right; padding-right: 5px; }
.ck input { appearance: none; width: 14px; height: 14px; border: 1px solid #999; background: #fff; margin: 0; vertical-align: middle; }
.mark { position: absolute; left: 182px; top: 0; width: 128px; height: 58px; border: 2px solid #ee1111; box-shadow: 2px 2px 3px #0004, inset 2px 2px 3px #0002; }
.summary { height: 37px; background: #f0f0f0; border-top: 1px solid #c8c8c8; padding: 6px 24px; }
.summary output { display: block; width: 38px; height: 24px; border: 1px solid #c8c8c8; background: #fff; text-align: right; padding: 5px 3px; }
.scroll { display: flex; height: 17px; background: #f0f0f0; padding: 1px; }
.scroll button { width: 16px; height: 15px; border: 1px solid #999; background: #fff; }
.thumb { width: 234px; height: 15px; border: 1px solid #999; background: #fff; }
.track { flex: 1; }
aside { width: 25px; padding: 4px 0 0 4px; display: flex; flex-direction: column; gap: 4px; }
aside button { writing-mode: vertical-rl; width: 21px; height: 76px; background: #dcdcdc; border: 1px solid #c8c8c8; justify-content: flex-start; padding-top: 6px; gap: 2px; }
aside button + button { height: 129px; }
footer { height: 27px; display: flex; gap: 4px; padding: 3px 4px 1px; border-bottom: 1px solid #c4c8d4; }
footer button { height: 22px; padding: 0 4px 0 7px; gap: 2px; background: #dcdcdc; border: 1px solid #c8c8c8; }
```
